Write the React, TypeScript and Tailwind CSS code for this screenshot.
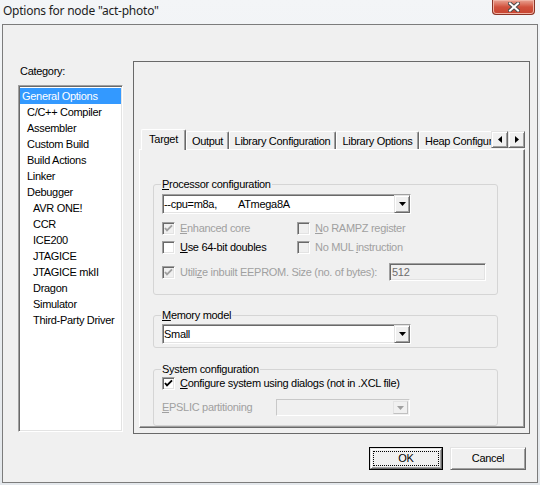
import React from 'react';

const sunken =
  'border border-[#a0a0a0] border-r-white border-b-white shadow-[inset_1px_1px_0_#696969,inset_-1px_-1px_0_#e3e3e3]';
const raised =
  'border border-[#e3e3e3] border-r-[#696969] border-b-[#696969] shadow-[inset_1px_1px_0_#ffffff,inset_-1px_-1px_0_#a0a0a0]';

const Tick = ({ color }: { color: string }) => (
  <svg width="9" height="9" viewBox="0 0 9 9">
    <polyline points="1,4 3,6.3 8,1.3" fill="none" stroke={color} strokeWidth="1.9" />
  </svg>
);

const Check = ({ checked, disabled }: { checked?: boolean; disabled?: boolean }) => (
  <span
    className={`flex h-[13px] w-[13px] shrink-0 items-center justify-center ${sunken} ${
      disabled ? 'bg-[#f0f0f0]' : 'bg-white'
    }`}
  >
    {checked && <Tick color={disabled ? '#a0a0a0' : '#000000'} />}
  </span>
);

const Arrow = ({ color = '#000' }: { color?: string }) => (
  <svg width="7" height="4" viewBox="0 0 7 4">
    <polygon points="0,0 7,0 3.5,4" fill={color} />
  </svg>
);

const DropButton = ({ disabled }: { disabled?: boolean }) => (
  <span className={`ml-auto flex h-full w-[16px] items-center justify-center bg-[#f0f0f0] ${raised}`}>
    <Arrow color={disabled ? '#a0a0a0' : '#000'} />
  </span>
);

const u = (s: string) => <span className="underline underline-offset-[1px]">{s}</span>;

const categories: { label: string; indent: 0 | 1 | 2 }[] = [
  { label: 'General Options', indent: 0 },
  { label: 'C/C++ Compiler', indent: 1 },
  { label: 'Assembler', indent: 1 },
  { label: 'Custom Build', indent: 1 },
  { label: 'Build Actions', indent: 1 },
  { label: 'Linker', indent: 1 },
  { label: 'Debugger', indent: 1 },
  { label: 'AVR ONE!', indent: 2 },
  { label: 'CCR', indent: 2 },
  { label: 'ICE200', indent: 2 },
  { label: 'JTAGICE', indent: 2 },
  { label: 'JTAGICE mkII', indent: 2 },
  { label: 'Dragon', indent: 2 },
  { label: 'Simulator', indent: 2 },
  { label: 'Third-Party Driver', indent: 2 },
];

const GroupBox = ({ title, className, children }: { title: React.ReactNode; className: string; children: React.ReactNode }) => (
  <div className={`relative shrink-0 rounded-[3px] border border-[#d5d5d5] ${className}`}>
    <span className="absolute -top-[7px] left-[7px] whitespace-nowrap bg-[#f0f0f0] px-[1px] leading-[13px]">{title}</span>
    {children}
  </div>
);

export default function App() {
  return (
    <div className="flex h-[485px] w-[540px] flex-col overflow-hidden bg-gradient-to-b from-[#f3f5f7] to-[#e4e8ec] font-['Liberation_Sans',Arial,sans-serif] text-[11px] leading-[13px] tracking-[-0.3px] text-black">
      {/* title bar */}
      <div className="flex h-[24px] shrink-0 items-start justify-between">
        <span className="mt-[3px] pl-[3px] font-['Noto_Sans',sans-serif] text-[12px] leading-[16px] tracking-[-0.25px] text-[#1e1e1e]">
          Options for node "act-photo"
        </span>
        <span className="mr-[5px] flex h-[15px] w-[43px] items-center justify-center rounded-b-[4px] border border-t-0 border-[#8a3325] bg-gradient-to-b from-[#e8a293] via-[#d1513d] to-[#c74430] shadow-[inset_0_0_0_1px_#f0b4a6]">
          <svg width="12" height="10" viewBox="0 0 12 10">
            <path d="M2 1.5 L10 8.5 M10 1.5 L2 8.5" stroke="#4c4c4c" strokeWidth="4" strokeLinecap="square" />
            <path d="M2 1.5 L10 8.5 M10 1.5 L2 8.5" stroke="#ffffff" strokeWidth="2" strokeLinecap="square" />
          </svg>
        </span>
      </div>

      {/* client */}
      <div className="ml-[2px] flex h-[459px] w-[536px] shrink-0 flex-col border border-[#7c7c7c] bg-[#f0f0f0]">
        <div className="flex items-start pl-[15px] pt-[36px]">
          {/* category */}
          <div className="flex flex-col pt-[4px]">
            <span className="pl-[2px]">Category:</span>
            <div className={`mt-[7px] h-[347px] w-[105px] bg-white pt-[2px] ${sunken}`}>
              {categories.map((c, i) => (
                <div
                  key={c.label}
                  className={`flex h-[16px] items-center whitespace-nowrap ${
                    c.indent === 0 ? 'pl-[2px]' : c.indent === 1 ? 'pl-[8px]' : 'pl-[14px]'
                  } ${i === 0 ? 'mx-px bg-[#3399ff] text-white' : ''}`}
                >
                  {c.label}
                </div>
              ))}
            </div>
          </div>

          {/* options panel */}
          <div className="ml-[10px] flex h-[373px] w-[397px] flex-col border border-[#696969] pl-[5px] pt-[67px]">
            {/* tab header */}
            <div className="flex h-[20px] w-[386px]">
              <div className="flex h-[20px] w-[352px] overflow-x-clip pl-[2px]">
                <div className="relative z-10 flex h-[21px] w-[45px] shrink-0 items-center justify-center self-start rounded-t-[2px] border border-b-0 border-white border-r-[#696969] bg-[#f0f0f0] pb-[2px] shadow-[inset_-1px_0_0_#a0a0a0]">
                  Target
                </div>
                <div className="flex h-[18px] w-[43px] shrink-0 items-center justify-center self-end rounded-t-[2px] border border-b-0 border-white border-r-[#696969] pt-[1px] shadow-[inset_-1px_0_0_#a0a0a0]">
                  Output
                </div>
                <div className="flex h-[18px] w-[107px] shrink-0 items-center justify-center self-end rounded-t-[2px] border border-b-0 border-white border-r-[#696969] pt-[1px] shadow-[inset_-1px_0_0_#a0a0a0]">
                  Library Configuration
                </div>
                <div className="flex h-[18px] w-[83px] shrink-0 items-center justify-center self-end rounded-t-[2px] border border-b-0 border-white border-r-[#696969] pt-[1px] shadow-[inset_-1px_0_0_#a0a0a0]">
                  Library Options
                </div>
                <div className="flex h-[18px] w-[95px] shrink-0 items-center self-end whitespace-nowrap rounded-t-[2px] border border-b-0 border-white border-r-[#696969] pl-[5px] pt-[1px]">
                  Heap Configuration
                </div>
              </div>
              <div className="mt-[2px] flex h-[17px]">
                <span className={`flex w-[17px] items-center justify-center bg-[#f0f0f0] ${raised}`}>
                  <svg width="4" height="7" viewBox="0 0 4 7">
                    <polygon points="4,0 4,7 0,3.5" fill="#000" />
                  </svg>
                </span>
                <span className={`flex w-[17px] items-center justify-center bg-[#f0f0f0] ${raised}`}>
                  <svg width="4" height="7" viewBox="0 0 4 7">
                    <polygon points="0,0 0,7 4,3.5" fill="#000" />
                  </svg>
                </span>
              </div>
            </div>

            {/* tab page */}
            <div className="flex h-[279px] w-[386px] flex-col border border-white border-r-[#696969] border-b-[#696969] pl-[13px] shadow-[inset_-1px_-1px_0_#a0a0a0]">
              <GroupBox title={<>{u('P')}rocessor configuration</>} className="mt-[34px] h-[111px] w-[345px] pl-[8px] pt-[9px]">
                <div className={`flex h-[20px] w-[249px] items-center bg-white pl-[1px] ${sunken}`}>
                  <span className="whitespace-pre">--cpu=m8a,</span>
                  <span className="ml-[21px]">ATmega8A</span>
                  <DropButton />
                </div>
                <div className="mt-[8px] flex h-[13px] items-center">
                  <div className="flex w-[135px] items-center gap-[5px] text-[#a0a0a0]">
                    <Check checked disabled />
                    <span>{u('E')}nhanced core</span>
                  </div>
                  <div className="flex items-center gap-[5px] text-[#a0a0a0]">
                    <Check disabled />
                    <span>{u('N')}o RAMPZ register</span>
                  </div>
                </div>
                <div className="mt-[6px] flex h-[13px] items-center">
                  <div className="flex w-[135px] items-center gap-[5px]">
                    <Check />
                    <span>{u('U')}se 64-bit doubles</span>
                  </div>
                  <div className="flex items-center gap-[5px] text-[#a0a0a0]">
                    <Check disabled />
                    <span>No MUL {u('i')}nstruction</span>
                  </div>
                </div>
                <div className="mt-[9px] flex h-[18px] w-[324px] items-center justify-between text-[#a0a0a0]">
                  <div className="flex items-center gap-[5px] whitespace-nowrap">
                    <Check checked disabled />
                    <span>Utili{u('z')}e inbuilt EEPROM. Size (no. of bytes):</span>
                  </div>
                  <div className={`flex h-[18px] w-[97px] shrink-0 items-center bg-[#f0f0f0] pl-[2px] text-[#6d6d6d] ${sunken}`}>512</div>
                </div>
              </GroupBox>

              <GroupBox title={<>{u('M')}emory model</>} className="mt-[20px] h-[33px] w-[345px] pl-[8px] pt-[8px]">
                <div className={`flex h-[20px] w-[249px] items-center bg-white pl-[1px] ${sunken}`}>
                  <span>Small</span>
                  <DropButton />
                </div>
              </GroupBox>

              <GroupBox title="System configuration" className="mt-[21px] h-[57px] w-[345px] pl-[8px] pt-[7px]">
                <div className="flex h-[13px] items-center gap-[5px] whitespace-nowrap">
                  <Check checked />
                  <span>{u('C')}onfigure system using dialogs (not in .XCL file)</span>
                </div>
                <div className="mt-[9px] flex h-[17px] items-center">
                  <span className="w-[114px] text-[#a0a0a0]">{u('E')}PSLIC partitioning</span>
                  <div className="flex h-[17px] w-[134px] items-center border border-[#c8c8c8] border-r-white border-b-white bg-[#f0f0f0] p-[1px]">
                    <span className="ml-auto flex h-full w-[15px] items-center justify-center border border-[#e3e3e3] border-r-[#c0c0c0] border-b-[#c0c0c0]">
                      <Arrow color="#a0a0a0" />
                    </span>
                  </div>
                </div>
              </GroupBox>
            </div>
          </div>
        </div>

        {/* buttons */}
        <div className="mt-[13px] flex justify-end gap-[7px] pr-[11px]">
          <div className="flex h-[23px] w-[74px] border border-black">
            <div className={`flex flex-1 items-center justify-center bg-[#f0f0f0] p-[2px] ${raised}`}>
              <div className="flex h-full w-full items-center justify-center border border-dotted border-black">OK</div>
            </div>
          </div>
          <div className={`flex h-[23px] w-[76px] items-center justify-center bg-[#f0f0f0] ${raised}`}>Cancel</div>
        </div>
      </div>
    </div>
  );
}
